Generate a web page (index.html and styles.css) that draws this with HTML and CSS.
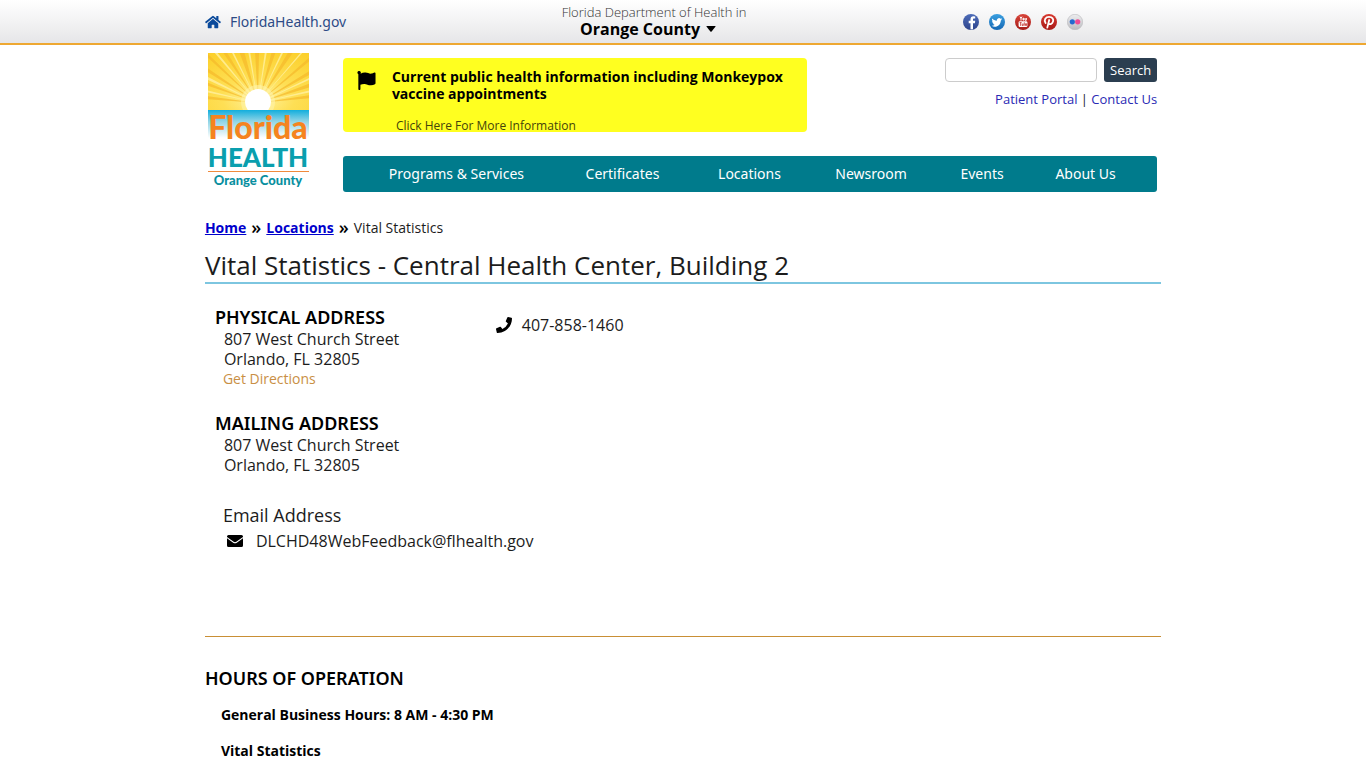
FILE: index.html
```html
<!DOCTYPE html>
<html lang="en">
<head>
  <meta charset="UTF-8" />
  <meta name="viewport" content="width=device-width, initial-scale=1" />
  <title>Vital Statistics | Florida Department of Health in Orange County</title>
  <link rel="stylesheet" href="styles.css">
</head>
<body>

  <div class="top-bar">
    <div class="wrap top-row">
      <a class="state-link" href="#">
        <svg class="icon-home" viewBox="0 0 576 512" aria-hidden="true"><path fill="currentColor" d="M280 148 96 300v164a16 16 0 0 0 16 16h112a16 16 0 0 0 16-16v-96a16 16 0 0 1 16-16h64a16 16 0 0 1 16 16v96a16 16 0 0 0 16 16h112a16 16 0 0 0 16-16V300L296 148a12 12 0 0 0-16 0zM572 251l-84-69V44a12 12 0 0 0-12-12h-56a12 12 0 0 0-12 12v72l-90-74a48 48 0 0 0-61 0L4 251a12 12 0 0 0-2 17l26 31a12 12 0 0 0 17 2L280 107a12 12 0 0 1 16 0l235 194a12 12 0 0 0 17-2l26-31a12 12 0 0 0-2-17z"/></svg>
        <span>FloridaHealth.gov</span>
      </a>

      <div class="county">
        <span class="county-dept">Florida Department of Health in</span>
        <button class="county-name" type="button"><span>Orange County</span><svg viewBox="0 0 10 6" aria-hidden="true"><path d="M1 0h8q1 0 .4.8L5.600 5.400q-.6.6-1.200 0L.6.8Q0 0 1 0z"/></svg></button>
      </div>

      <div class="social">
        <a href="#" aria-label="Facebook">
          <svg viewBox="0 0 16 16"><defs><linearGradient id="fb" x2="0" y2="1"><stop stop-color="#4d6cb8"/><stop offset="1" stop-color="#2d448c"/></linearGradient></defs><circle cx="8" cy="8" r="8" fill="url(#fb)"/><path fill="#fff" d="M7.500 15.500V9.200H5.700V6.700h1.800V5.200c0-1.900 1.100-2.900 2.900-2.900l1.800.1v2.200H11c-.8 0-1 .4-1 1v1.100h2.200l-.3 2.500H10v6z"/></svg>
        </a>
        <a href="#" aria-label="Twitter">
          <svg viewBox="0 0 16 16"><defs><linearGradient id="tw" x2="0" y2="1"><stop stop-color="#3a9fe0"/><stop offset="1" stop-color="#1568b4"/></linearGradient></defs><circle cx="8" cy="8" r="8" fill="url(#tw)"/><path fill="#fff" d="M13.200 5.200c-.4.200-.8.300-1.200.3.400-.3.700-.7.900-1.200-.4.300-.9.400-1.400.5a2.200 2.200 0 0 0-3.700 2C6 6.700 4.400 5.800 3.300 4.500c-.6 1-.3 2.300.7 2.900-.4 0-.7-.1-1-.3 0 1 .7 2 1.800 2.200-.3.100-.7.100-1 0 .3.900 1.100 1.500 2 1.500-.9.700-2 1-3.200.9 4 2.500 9.200-.1 9.200-5.300.5-.3.900-.7 1.400-1.200z"/></svg>
        </a>
        <a href="#" aria-label="YouTube">
          <svg viewBox="0 0 16 16"><defs><linearGradient id="yt" x2="0" y2="1"><stop stop-color="#d8443a"/><stop offset="1" stop-color="#a51c18"/></linearGradient></defs><circle cx="8" cy="8" r="8" fill="url(#yt)"/><path fill="none" stroke="#fff" d="m5 2.600 1 2v2M7 2.600l-1 2M8 4.200v1.900h.7V4.200zM10 4v2.200h1.300V4"/><rect x="3.600" y="7.300" width="8.800" height="5.800" rx="1.300" fill="#fff"/><path fill="none" stroke="#c0302a" stroke-width=".8" d="M4.600 8.600h2M5.600 8.600v3.300M7.200 9.600v2h1v-2M9.300 8.300v3.400M10.500 11.500h1v-1.800h-1z"/></svg>
        </a>
        <a href="#" aria-label="Pinterest">
          <svg viewBox="0 0 16 16"><defs><linearGradient id="pn" x2="0" y2="1"><stop stop-color="#d8392f"/><stop offset="1" stop-color="#a81a17"/></linearGradient></defs><circle cx="8" cy="8" r="8" fill="url(#pn)"/><path fill="none" stroke="#fff" stroke-width="1.800" stroke-linecap="round" d="M4.600 9C2.400 5.800 4.800 2.900 8 2.900c3.500 0 4.800 2.300 4 4.700-.8 2.700-3.600 3.300-4.400 1.500M8.200 6 6.300 13.600"/></svg>
        </a>
        <a href="#" aria-label="Flickr">
          <svg viewBox="0 0 16 16"><defs><linearGradient id="fl" x2="0" y2="1"><stop stop-color="#eeeef0"/><stop offset="1" stop-color="#bcbcc0"/></linearGradient></defs><circle cx="8" cy="8" r="7.700" fill="url(#fl)" stroke="#b8b8bc" stroke-width=".6"/><circle cx="5.300" cy="7.800" r="2.600" fill="#2469cf"/><circle cx="10.700" cy="7.800" r="2.600" fill="#ee4c94"/></svg>
        </a>
      </div>
    </div>
  </div>

  <header class="wrap site-header">
    <a class="logo" href="#" aria-label="Florida Health Orange County">
      <svg viewBox="0 0 101 138">
        <defs>
          <radialGradient id="sky" cx=".5" cy=".8" r=".9"><stop stop-color="#fff3a0"/><stop offset=".4" stop-color="#fedf55"/><stop offset="1" stop-color="#fcd02c"/></radialGradient>
          <linearGradient id="sea" x2="0" y2="1"><stop stop-color="#12aedd"/><stop offset=".4" stop-color="#8fd4e6"/><stop offset="1" stop-color="#fff"/></linearGradient>
          <clipPath id="sun-box"><path d="M0 0h101v57H0z"/></clipPath>
        </defs>
        <path fill="url(#sky)" d="M0 0h101v57H0z"/>
        <g clip-path="url(#sun-box)">
          <path fill="#f5b92b" opacity=".7" d="M50 50 47-2h4zM50 50 31-2h5zM50 50 14-2h4zM50 50-2-1v4zM50 50-2 14v4zM50 50-2 29v3zM50 50-2 43v3zM50 50 64-2h4zM50 50 81-2h5zM50 50 103 3v4zM50 50 103 17v4zM50 50 103 30v4zM50 50 103 42v3z"/>
          <path fill="#fff0a0" opacity=".8" d="M50 50 40-2h2zM50 50 23-2h2zM50 50 5-2h3zM50 50-2 23v3zM50 50-2 37v2zM50 50 57-2h2zM50 50 74-2h2zM50 50 94-2h2zM50 50 103 24v2zM50 50 103 37v2z"/>
          <circle cx="50" cy="49" r="17" fill="#fff3a8" opacity=".6"/>
          <circle cx="50" cy="49" r="13" fill="#fff"/>
        </g>
        <path fill="url(#sea)" d="M0 57h101v28H0z"/>
        <text class="logo-florida" x="50" y="86" text-anchor="middle">Florida</text>
        <text class="logo-health" x="50" y="114" text-anchor="middle">HEALTH</text>
        <path fill="#f08a3c" d="M0 118h101v1H0z"/>
        <text class="logo-county" x="50" y="132" text-anchor="middle">Orange County</text>
      </svg>
    </a>

    <div class="header-main">
      <div class="header-top">
        <div class="alert">
          <svg class="icon-flag" viewBox="0 0 19 20" aria-hidden="true"><path d="M1.800 0a1.800 1.800 0 0 1 1.400 2.900C5 2 6.500 1.500 8.500 1.700c2.500.3 4.300 1.500 6.800.9.900-.2 1.800-.6 2.500-1 .6-.3 1.200 0 1.200.8V13c0 .5-.2.800-.6 1-1.500.8-3 1.200-4.600 1.100-2.500-.1-4.300-1.600-6.800-1.500-1.400 0-2.700.4-3.900.9V19c0 .6-.3.900-.8.900h-.6c-.5 0-.8-.3-.8-.9V3.400A1.800 1.800 0 0 1 1.800 0z"/></svg>
          <div class="alert-body">
            <strong>Current public health information including Monkeypox vaccine appointments</strong>
            <a href="#">Click Here For More Information</a>
          </div>
        </div>

        <div class="tools">
          <form class="search">
            <input type="text" aria-label="Search this site" />
            <button type="submit">Search</button>
          </form>
          <p class="quick-links"><a href="#">Patient Portal</a> | <a href="#">Contact Us</a></p>
        </div>
      </div>

      <nav class="main-nav">
        <a href="#">Programs &amp; Services</a>
        <a href="#">Certificates</a>
        <a href="#">Locations</a>
        <a href="#">Newsroom</a>
        <a href="#">Events</a>
        <a href="#">About Us</a>
      </nav>
    </div>
  </header>

  <main class="wrap">
    <div class="breadcrumb">
      <a href="#">Home</a><b>»</b><a href="#">Locations</a><b>»</b><span>Vital Statistics</span>
    </div>

    <h1>Vital Statistics - Central Health Center, Building 2</h1>

    <div class="location">
      <div class="addresses">
        <section class="address">
          <h2>Physical Address</h2>
          <p>807 West Church Street<br>Orlando, FL 32805</p>
          <a class="directions" href="#">Get Directions</a>
        </section>

        <section class="address">
          <h2>Mailing Address</h2>
          <p>807 West Church Street<br>Orlando, FL 32805</p>
        </section>

        <section class="email">
          <h3>Email Address</h3>
          <p>
            <svg viewBox="0 0 16 12" aria-hidden="true"><path d="M1.500 0h13Q16 0 16 1.500v.4L9.300 6.800q-1.300.9-2.600 0L0 1.900v-.4Q0 0 1.500 0zM0 3.200l6.200 4.500q1.800 1.200 3.600 0L16 3.200v7.300q0 1.500-1.500 1.500h-13Q0 12 0 10.500z"/></svg>
            <span>DLCHD48WebFeedback@flhealth.gov</span>
          </p>
        </section>
      </div>

      <p class="phone">
        <svg viewBox="0 0 512 512" aria-hidden="true"><path d="M493 25 389 1a24 24 0 0 0-27 14l-48 112a24 24 0 0 0 7 28l61 50a371 371 0 0 1-177 177l-50-61a24 24 0 0 0-28-7L15 362a24 24 0 0 0-14 27l24 104a24 24 0 0 0 23 19c256 0 464-207 464-464a24 24 0 0 0-19-23z"/></svg>
        <span>407-858-1460</span>
      </p>
    </div>

    <section class="hours">
      <h2>Hours of Operation</h2>
      <p>General Business Hours: 8 AM - 4:30 PM</p>
      <p>Vital Statistics</p>
    </section>
  </main>

</body>
</html>
```

FILE: styles.css
```css
body, h1, h2, h3, p {
  margin: 0;
  padding: 0;
}

body {
  font-family: "Open Sans", "Noto Sans", Arial, sans-serif;
  font-size: 16px;
  font-weight: 400;
  color: #1c1c1c;
  background: #fff;
}

a {
  text-decoration: none;
}

button, input {
  font-family: inherit;
}

.wrap {
  width: 70%;
  margin: 0 auto;
}

/* Top bar */
.top-bar {
  background: linear-gradient(#fff, #e6e6e8);
  border-bottom: 2px solid #eea832;
}

.top-row {
  display: grid;
  grid-template-columns: 1fr auto 1fr;
  align-items: center;
  height: 43px;
}

.state-link {
  display: flex;
  align-items: center;
  gap: 9px;
  font-family: "Noto Sans", sans-serif;
  font-size: 14px;
  color: #2d4b86;
}

.icon-home {
  width: 16px;
  height: 14px;
  color: #0b4a9b;
}

.county {
  display: flex;
  flex-direction: column;
  align-items: center;
  margin: 0 58px 2px 0;
}

.county-dept {
  font-size: 13px;
  line-height: 17px;
  font-weight: 300;
  color: #333;
}

.county-name {
  display: flex;
  align-items: center;
  gap: 6px;
  margin-right: 12px;
  padding: 0;
  border: 0;
  background: none;
  font-size: 16px;
  line-height: 17px;
  font-weight: 700;
  color: #000;
  cursor: pointer;
}

.county-name svg {
  width: 10px;
  height: 6px;
}

.social {
  display: flex;
  justify-content: flex-end;
  gap: 10px;
  padding-right: 78px;
}

.social svg {
  display: block;
  width: 16px;
  height: 16px;
}

/* Header */
.site-header {
  display: flex;
  gap: 34px;
  padding-top: 8px;
}

.logo {
  flex: none;
  width: 101px;
  margin-left: 3px;
}

.logo svg {
  display: block;
  width: 101px;
  height: 138px;
}

.logo-florida {
  font: 900 32px Lato, sans-serif;
  fill: #f5841f;
}

.logo-health {
  font: 900 26px Lato, sans-serif;
  fill: #0a9fae;
}

.logo-county {
  font: 900 13px Lato, sans-serif;
  fill: #0a8fa0;
}

.header-main {
  flex: 1;
  padding: 5px 4px 0 0;
}

.header-top {
  display: flex;
  justify-content: space-between;
  align-items: flex-start;
}

.alert {
  display: flex;
  gap: 16px;
  width: 57%;
  height: 74px;
  box-sizing: border-box;
  padding: 10px 14px 0;
  overflow: hidden;
  color: #000;
  background: #ffff20;
  border-radius: 4px;
}

.icon-flag {
  flex: none;
  width: 19px;
  height: 19px;
  margin-top: 3px;
}

.alert-body strong {
  display: block;
  font-size: 14px;
  line-height: 17px;
  font-weight: 700;
}

.alert-body a {
  display: block;
  margin: 16px 0 0 4px;
  font-size: 12px;
  line-height: 16px;
  color: #44440a;
}

.search {
  display: flex;
  gap: 7px;
}

.search input {
  width: 152px;
  height: 24px;
  box-sizing: border-box;
  border: 1px solid #ccc;
  border-radius: 4px;
}

.search button {
  width: 53px;
  height: 24px;
  padding: 0;
  border: 0;
  border-radius: 3px;
  background: #2b3e50;
  color: #fff;
  font-size: 13px;
  cursor: pointer;
}

.quick-links {
  margin-top: 8px;
  font-size: 13px;
  line-height: 18px;
  text-align: right;
}

.quick-links a {
  color: #2a2ab4;
}

.main-nav {
  display: grid;
  grid-template-columns: 201fr 131fr 123fr 120fr 102fr 105fr;
  margin-top: 24px;
  padding: 0 19px 0 13px;
  background: #007b8c;
  border-radius: 3px;
}

.main-nav a {
  font-family: "Noto Sans", sans-serif;
  font-size: 14px;
  line-height: 36px;
  text-align: center;
  white-space: nowrap;
  color: #fff;
}

/* Content */
.breadcrumb {
  display: flex;
  gap: 5px;
  margin-top: 26px;
  font-size: 14px;
  line-height: 20px;
}

.breadcrumb b {
  font-size: 18px;
  line-height: 18px;
  font-weight: 600;
  color: #000;
}

.breadcrumb a {
  font-weight: 700;
  text-decoration: underline;
  color: #00c;
}

h1 {
  margin-top: 10px;
  border-bottom: 2px solid #7dc6e0;
  font-size: 26px;
  line-height: 34px;
  font-weight: 400;
}

h2 {
  font-family: "Noto Sans", sans-serif;
  font-size: 18px;
  line-height: 24px;
  font-weight: 600;
  text-transform: uppercase;
  color: #000;
}

.location {
  display: flex;
  padding: 21px 10px 82px;
  border-bottom: 1px solid #c98f35;
}

.addresses {
  width: 30%;
}

.address {
  margin-bottom: 27px;
}

.address p {
  margin-left: 9px;
  line-height: 20px;
}

.directions {
  display: block;
  margin: 0 0 -5px 8px;
  font-size: 14px;
  line-height: 20px;
  color: #c98f45;
}

.email h3 {
  margin-left: 8px;
  font-size: 18px;
  line-height: 26px;
  font-weight: 400;
}

.email p,
.phone {
  display: flex;
  align-items: center;
}

.email p {
  gap: 13px;
  margin-left: 12px;
  line-height: 26px;
}

.email svg {
  flex: none;
  width: 16px;
  height: 12px;
}

.phone {
  align-self: flex-start;
  gap: 10px;
  margin-top: 9px;
  line-height: 22px;
}

.phone svg {
  width: 16px;
  height: 16px;
}

.hours {
  padding-top: 29px;
}

.hours p {
  margin: 14px 0 0 16px;
  font-size: 14px;
  line-height: 22px;
  font-weight: 700;
  color: #000;
}
```
